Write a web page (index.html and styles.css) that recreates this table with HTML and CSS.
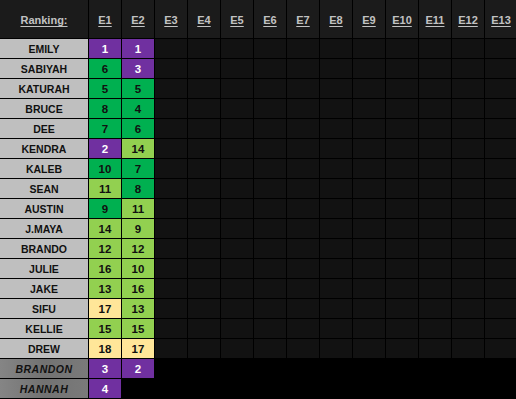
FILE: index.html
```html
<!DOCTYPE html>
<html>
<head>
<meta charset="utf-8">
<link rel="stylesheet" href="styles.css">
</head>
<body>
<div class="sheet">
  <div class="hd hd-title"><span>Ranking:</span></div>
  <div class="hd"><span>E1</span></div>
  <div class="hd"><span>E2</span></div>
  <div class="hd"><span>E3</span></div>
  <div class="hd"><span>E4</span></div>
  <div class="hd"><span>E5</span></div>
  <div class="hd"><span>E6</span></div>
  <div class="hd"><span>E7</span></div>
  <div class="hd"><span>E8</span></div>
  <div class="hd"><span>E9</span></div>
  <div class="hd"><span>E10</span></div>
  <div class="hd"><span>E11</span></div>
  <div class="hd"><span>E12</span></div>
  <div class="hd"><span>E13</span></div>

  <div class="name">EMILY</div><div class="c p">1</div><div class="c p">1</div>
  <div class="e"></div><div class="e"></div><div class="e"></div><div class="e"></div><div class="e"></div><div class="e"></div><div class="e"></div><div class="e"></div><div class="e"></div><div class="e"></div><div class="e"></div>

  <div class="name">SABIYAH</div><div class="c g">6</div><div class="c p">3</div>
  <div class="e"></div><div class="e"></div><div class="e"></div><div class="e"></div><div class="e"></div><div class="e"></div><div class="e"></div><div class="e"></div><div class="e"></div><div class="e"></div><div class="e"></div>

  <div class="name">KATURAH</div><div class="c g">5</div><div class="c g">5</div>
  <div class="e"></div><div class="e"></div><div class="e"></div><div class="e"></div><div class="e"></div><div class="e"></div><div class="e"></div><div class="e"></div><div class="e"></div><div class="e"></div><div class="e"></div>

  <div class="name">BRUCE</div><div class="c g">8</div><div class="c g">4</div>
  <div class="e"></div><div class="e"></div><div class="e"></div><div class="e"></div><div class="e"></div><div class="e"></div><div class="e"></div><div class="e"></div><div class="e"></div><div class="e"></div><div class="e"></div>

  <div class="name">DEE</div><div class="c g">7</div><div class="c g">6</div>
  <div class="e"></div><div class="e"></div><div class="e"></div><div class="e"></div><div class="e"></div><div class="e"></div><div class="e"></div><div class="e"></div><div class="e"></div><div class="e"></div><div class="e"></div>

  <div class="name">KENDRA</div><div class="c p">2</div><div class="c l">14</div>
  <div class="e"></div><div class="e"></div><div class="e"></div><div class="e"></div><div class="e"></div><div class="e"></div><div class="e"></div><div class="e"></div><div class="e"></div><div class="e"></div><div class="e"></div>

  <div class="name">KALEB</div><div class="c g">10</div><div class="c g">7</div>
  <div class="e"></div><div class="e"></div><div class="e"></div><div class="e"></div><div class="e"></div><div class="e"></div><div class="e"></div><div class="e"></div><div class="e"></div><div class="e"></div><div class="e"></div>

  <div class="name">SEAN</div><div class="c l">11</div><div class="c g">8</div>
  <div class="e"></div><div class="e"></div><div class="e"></div><div class="e"></div><div class="e"></div><div class="e"></div><div class="e"></div><div class="e"></div><div class="e"></div><div class="e"></div><div class="e"></div>

  <div class="name">AUSTIN</div><div class="c g">9</div><div class="c l">11</div>
  <div class="e"></div><div class="e"></div><div class="e"></div><div class="e"></div><div class="e"></div><div class="e"></div><div class="e"></div><div class="e"></div><div class="e"></div><div class="e"></div><div class="e"></div>

  <div class="name">J.MAYA</div><div class="c l">14</div><div class="c l">9</div>
  <div class="e"></div><div class="e"></div><div class="e"></div><div class="e"></div><div class="e"></div><div class="e"></div><div class="e"></div><div class="e"></div><div class="e"></div><div class="e"></div><div class="e"></div>

  <div class="name">BRANDO</div><div class="c l">12</div><div class="c l">12</div>
  <div class="e"></div><div class="e"></div><div class="e"></div><div class="e"></div><div class="e"></div><div class="e"></div><div class="e"></div><div class="e"></div><div class="e"></div><div class="e"></div><div class="e"></div>

  <div class="name">JULIE</div><div class="c l">16</div><div class="c l">10</div>
  <div class="e"></div><div class="e"></div><div class="e"></div><div class="e"></div><div class="e"></div><div class="e"></div><div class="e"></div><div class="e"></div><div class="e"></div><div class="e"></div><div class="e"></div>

  <div class="name">JAKE</div><div class="c l">13</div><div class="c l">16</div>
  <div class="e"></div><div class="e"></div><div class="e"></div><div class="e"></div><div class="e"></div><div class="e"></div><div class="e"></div><div class="e"></div><div class="e"></div><div class="e"></div><div class="e"></div>

  <div class="name">SIFU</div><div class="c y">17</div><div class="c l">13</div>
  <div class="e"></div><div class="e"></div><div class="e"></div><div class="e"></div><div class="e"></div><div class="e"></div><div class="e"></div><div class="e"></div><div class="e"></div><div class="e"></div><div class="e"></div>

  <div class="name">KELLIE</div><div class="c l">15</div><div class="c l">15</div>
  <div class="e"></div><div class="e"></div><div class="e"></div><div class="e"></div><div class="e"></div><div class="e"></div><div class="e"></div><div class="e"></div><div class="e"></div><div class="e"></div><div class="e"></div>

  <div class="name">DREW</div><div class="c y">18</div><div class="c y">17</div>
  <div class="e"></div><div class="e"></div><div class="e"></div><div class="e"></div><div class="e"></div><div class="e"></div><div class="e"></div><div class="e"></div><div class="e"></div><div class="e"></div><div class="e"></div>

  <div class="name alt">BRANDON</div><div class="c p">3</div><div class="c p">2</div>
  <div class="b b-wide"></div>

  <div class="name alt">HANNAH</div><div class="c p">4</div>
  <div class="b b-wider"></div>
</div>
</body>
</html>
```

FILE: styles.css
```css
html, body {
  margin: 0;
  padding: 0;
  background: #000;
  overflow: hidden;
}

.sheet {
  display: grid;
  grid-template-columns: 88px repeat(13, 32px);
  grid-template-rows: 38px repeat(18, 19px);
  gap: 1px;
  width: 516px;
  height: 399px;
  background: #000;
  font-family: "Liberation Sans", Arial, sans-serif;
  font-weight: bold;
}

.hd {
  background: #1b1b1b;
  color: #c2c2c2;
  font-size: 11px;
  display: flex;
  align-items: center;
  justify-content: center;
  padding-top: 2px;
}

.hd span {
  text-decoration: underline;
  text-underline-offset: 2px;
}

.hd-title {
  font-size: 11px;
}

.name {
  background: #bfbfbf;
  color: #111;
  font-size: 10.5px;
  display: flex;
  align-items: center;
  justify-content: center;
}

.name.alt {
  background: linear-gradient(90deg, #858585, #727272 50%, #7a7a7a);
  font-style: italic;
  letter-spacing: 0.5px;
}

.c {
  font-size: 11.5px;
  color: #111;
  display: flex;
  align-items: center;
  justify-content: center;
}

.p { background: #7030a0; color: #fff; }
.g { background: #00b050; }
.l { background: #92d050; }
.y { background: #ffe699; }

.e { background: #121212; }

.b { background: #000; }
.b-wide { grid-column: span 11; }
.b-wider { grid-column: span 12; }
```
